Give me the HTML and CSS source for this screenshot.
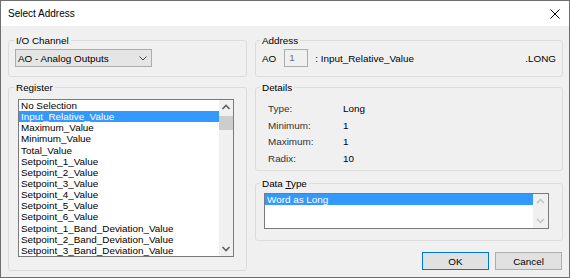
FILE: index.html
```html
<!DOCTYPE html>
<html lang="en">
<head>
    <meta charset="UTF-8">
    <meta name="viewport" content="width=device-width, initial-scale=1.0">
    <title>Select Address</title>
    <link rel="stylesheet" href="styles.css">
</head>
<body>
    <div class="window">
        <div class="titlebar">
            <span class="title">Select Address</span>
            <svg class="close" width="10" height="10" viewBox="0 0 10 10">
                <path d="M0.5 0.5L9.5 9.5M9.5 0.5L0.5 9.5" stroke="#000" stroke-width="1" fill="none"/>
            </svg>
        </div>

        <div class="dialog">
            <fieldset class="group group-channel">
                <legend>I/O Channel</legend>
                <div class="combo">
                    <span>AO - Analog Outputs</span>
                    <svg width="8" height="5" viewBox="0 0 8 5">
                        <path d="M0.5 0.5L4 4L7.5 0.5" stroke="#444" stroke-width="1" fill="none"/>
                    </svg>
                </div>
            </fieldset>

            <fieldset class="group group-address">
                <legend>Address</legend>
                <div class="address-row">
                    <span>AO</span>
                    <span class="addr-input">1</span>
                    <span class="addr-name">: Input_Relative_Value</span>
                    <span class="addr-suffix">.LONG</span>
                </div>
            </fieldset>

            <fieldset class="group group-register">
                <legend>Register</legend>
                <div class="listbox register-list">
                    <ul class="items">
                        <li>No Selection</li>
                        <li class="selected">Input_Relative_Value</li>
                        <li>Maximum_Value</li>
                        <li>Minimum_Value</li>
                        <li>Total_Value</li>
                        <li>Setpoint_1_Value</li>
                        <li>Setpoint_2_Value</li>
                        <li>Setpoint_3_Value</li>
                        <li>Setpoint_4_Value</li>
                        <li>Setpoint_5_Value</li>
                        <li>Setpoint_6_Value</li>
                        <li>Setpoint_1_Band_Deviation_Value</li>
                        <li>Setpoint_2_Band_Deviation_Value</li>
                        <li>Setpoint_3_Band_Deviation_Value</li>
                    </ul>
                    <div class="scrollbar">
                        <svg class="arrow" width="14" height="15" viewBox="0 0 14 15">
                            <path d="M3.5 9L7 5.5L10.5 9" stroke="#606060" stroke-width="1.6" fill="none"/>
                        </svg>
                        <div class="track"><div class="thumb"></div></div>
                        <svg class="arrow" width="14" height="15" viewBox="0 0 14 15">
                            <path d="M3.5 6L7 9.5L10.5 6" stroke="#606060" stroke-width="1.6" fill="none"/>
                        </svg>
                    </div>
                </div>
            </fieldset>

            <div class="right-stack">
                <fieldset class="group group-details">
                    <legend>Details</legend>
                    <div class="details">
                        <span class="label">Type:</span><span>Long</span>
                        <span class="label">Minimum:</span><span>1</span>
                        <span class="label">Maximum:</span><span>1</span>
                        <span class="label">Radix:</span><span>10</span>
                    </div>
                </fieldset>

                <fieldset class="group group-type">
                    <legend>Data <u>T</u>ype</legend>
                    <div class="listbox type-list">
                        <ul class="items">
                            <li class="selected">Word as Long</li>
                        </ul>
                        <div class="scrollbar disabled">
                            <svg class="arrow" width="15" height="15" viewBox="0 0 15 15">
                                <path d="M4 9L7.5 5.5L11 9" stroke="#c2c2c2" stroke-width="1.4" fill="none"/>
                            </svg>
                            <div class="track"></div>
                            <svg class="arrow" width="15" height="15" viewBox="0 0 15 15">
                                <path d="M4 6L7.5 9.5L11 6" stroke="#c2c2c2" stroke-width="1.4" fill="none"/>
                            </svg>
                        </div>
                    </div>
                </fieldset>

                <div class="buttons">
                    <button class="btn btn-default">OK</button>
                    <button class="btn">Cancel</button>
                </div>
            </div>
        </div>
    </div>
</body>
</html>
```

FILE: styles.css
```css
* {
    box-sizing: border-box;
}

body {
    margin: 0;
    background: #fff;
    color: #000;
    font-family: "Liberation Sans", Arial, sans-serif;
    font-size: 9.9px;
}

.window {
    width: 570px;
    height: 278px;
    border: 1px solid #6e6e6e;
    background: #f0f0f0;
}

.titlebar {
    height: 25px;
    background: #fff;
    display: flex;
    align-items: center;
    justify-content: space-between;
    padding: 0 9px 0 7px;
}

.title {
    font-size: 10px;
}

.dialog {
    display: grid;
    grid-template-columns: 239px 308px;
    column-gap: 8px;
    row-gap: 4px;
    padding: 8px 6px 0 7px;
}

.group {
    margin: 0;
    min-width: 0;
    border: 1px solid #dcdcdc;
    border-radius: 3px;
}

.group legend {
    padding: 0 2px;
    line-height: 13px;
}

.group-channel {
    padding: 2px 6px 9px 6px;
}

.group-channel legend {
    margin-left: -1px;
}

.group-address {
    padding: 2px 6px 9px 6px;
}

.group-address legend {
    margin-left: -2px;
}

.group-register {
    padding: 5px 12px 13px 9px;
}

.group-register legend {
    margin-left: -4px;
}

.group-details {
    padding: 6px 12px 3px 12px;
}

.group-details legend {
    margin-left: -8px;
}

.group-type {
    margin-top: 6px;
    padding: 3px 13px 11px 8px;
}

.group-type legend {
    margin-left: -4px;
}

/* combo box */
.combo {
    width: 137px;
    height: 18px;
    border: 1px solid #adadad;
    background: #e5e5e5;
    display: flex;
    align-items: center;
    justify-content: space-between;
    padding: 0 4px 0 2px;
}

/* address line */
.address-row {
    height: 18px;
    display: flex;
    align-items: center;
}

.addr-input {
    width: 24px;
    height: 18px;
    margin-left: 8px;
    border: 1px solid #acacac;
    color: #6d6d6d;
    padding-left: 4px;
    line-height: 16px;
}

.addr-name {
    margin-left: 7px;
}

.addr-suffix {
    margin-left: auto;
}

/* list boxes */
.listbox {
    display: flex;
    border: 1px solid #7a7a7a;
    background: #fff;
}

.register-list {
    width: 216px;
    height: 158px;
}

.type-list {
    width: 285px;
    height: 36px;
}

.items {
    flex: 1;
    list-style: none;
    margin: 0;
    padding: 0;
    overflow: hidden;
}

.items li {
    line-height: 11.15px;
    height: 11.15px;
    padding-left: 2px;
    white-space: nowrap;
}

.items li.selected {
    background: #3399ff;
    color: #fff;
}

.scrollbar {
    width: 14px;
    display: flex;
    flex-direction: column;
    background: #f0f0f0;
}

.type-list .scrollbar {
    width: 15px;
}

.scrollbar .arrow {
    display: block;
    flex-shrink: 0;
}

.track {
    flex: 1;
    padding-top: 1px;
}

.thumb {
    height: 14px;
    background: #cdcdcd;
}

/* details */
.details {
    display: grid;
    grid-template-columns: 75px auto;
    grid-auto-rows: 16.75px;
    align-items: center;
}

.details .label {
    color: #333;
}

/* buttons */
.right-stack {
    display: flex;
    flex-direction: column;
}

.buttons {
    display: flex;
    justify-content: flex-end;
    gap: 6px;
    margin-top: 11px;
    margin-right: 1px;
}

.btn {
    width: 67px;
    height: 18px;
    padding: 0;
    border: 1px solid #adadad;
    background: #e1e1e1;
    font-family: inherit;
    font-size: 9.9px;
    color: #000;
}

.btn-default {
    border-color: #0078d7;
}
```
